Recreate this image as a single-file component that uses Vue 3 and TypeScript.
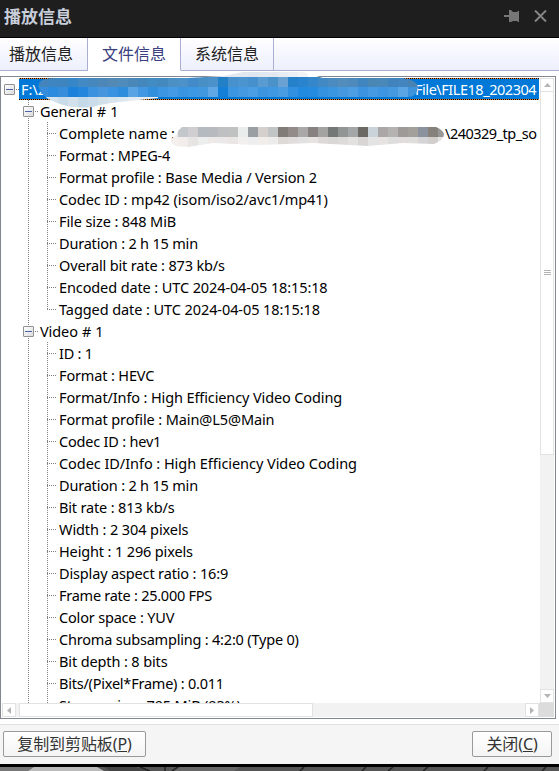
<script setup lang="ts">
interface Item {
  text: string
  tracking: number
  rest?: string
}

interface Group {
  title: string
  items: Item[]
}

interface Cell {
  x: number
  y: number
  h: number
  fill: string
}

const tabs = ['播放信息', '文件信息', '系统信息']
const activeTab = 1

const groups: Group[] = [
  {
    title: 'General # 1',
    items: [
      { text: 'Complete name : D:', tracking: 0, rest: '\\240329_tp_so' },
      { text: 'Format : MPEG-4', tracking: -0.2 },
      { text: 'Format profile : Base Media / Version 2', tracking: -0.13 },
      { text: 'Codec ID : mp42 (isom/iso2/avc1/mp41)', tracking: -0.06 },
      { text: 'File size : 848 MiB', tracking: -0.1 },
      { text: 'Duration : 2 h 15 min', tracking: -0.19 },
      { text: 'Overall bit rate : 873 kb/s', tracking: -0.15 },
      { text: 'Encoded date : UTC 2024-04-05 18:15:18', tracking: -0.11 },
      { text: 'Tagged date : UTC 2024-04-05 18:15:18', tracking: -0.08 },
    ],
  },
  {
    title: 'Video # 1',
    items: [
      { text: 'ID : 1', tracking: -0.25 },
      { text: 'Format : HEVC', tracking: -0.15 },
      { text: 'Format/Info : High Efficiency Video Coding', tracking: -0.12 },
      { text: 'Format profile : Main@L5@Main', tracking: -0.1 },
      { text: 'Codec ID : hev1', tracking: -0.2 },
      { text: 'Codec ID/Info : High Efficiency Video Coding', tracking: -0.05 },
      { text: 'Duration : 2 h 15 min', tracking: -0.19 },
      { text: 'Bit rate : 813 kb/s', tracking: -0.16 },
      { text: 'Width : 2 304 pixels', tracking: -0.1 },
      { text: 'Height : 1 296 pixels', tracking: -0.14 },
      { text: 'Display aspect ratio : 16:9', tracking: -0.15 },
      { text: 'Frame rate : 25.000 FPS', tracking: -0.26 },
      { text: 'Color space : YUV', tracking: -0.18 },
      { text: 'Chroma subsampling : 4:2:0 (Type 0)', tracking: -0.2 },
      { text: 'Bit depth : 8 bits', tracking: -0.12 },
      { text: 'Bits/(Pixel*Frame) : 0.011', tracking: -0.23 },
      { text: 'Stream size : 795 MiB (93%)', tracking: -0.15 },
    ],
  },
]

const strip = (colors: string, y: number, h: number): Cell[] =>
  colors.split(' ').map((c, i) => ({ x: i * 10, y, h, fill: '#' + c }))

const pathCells: Cell[] = [
  ...strip('fff fff fff fff fff fff fff fff fff fff fff fff fff fff fff fff f4f4f8 ecedf3 e6e9f1 e3e8f1 e3e8f0 dfe6ef e2e8f0 e4e9f1 e9ecf3 eeeff5 f3f3f7 fff fff fff fff fff fff fff fff fff fff fff', 0, 5),
  ...strip('4284bb 3f86c1 3e84bf 3786c8 4389c3 4688bd 4c87b7 5289b5 508cbb 4b88ba 4387bd 438bc3 4489bd 4b8fc3 4c91c7 428bc8 488fc6 4b91ca 2480c6 4791cd 4c94cf 4590cd 5a9bd1 4b92cb 69a2d2 2681cb 2983cd 3387ca 4289c4 4b8bc0 528dbc 4e8abb 4185bf 4b87b5 4a88ba 4083bd 4385be 4883b4', 5, 10),
  ...strip('368ddb 2b8bde 368ddb 1b81da 2486dd 3b93df 4796dd 3993e0 2f8ddd 57a3e4 4197e1 328fdc 3d96e1 449ae4 3995e2 3d98e3 4298df 60a8e5 147fd9 3b95e0 4499e0 4b9ee3 3d95df 4198e2 499be2 3191e0 228adf 248be0 3592e1 3b96e2 4799df 4d9de2 3c94e0 459ae3 3e95e1 4599df 5ba5e5 3e94dc', 15, 10),
  ...strip('e5edf3 d5e3ee c9dce9 d2e1eb c4dae9 cbddea d2e0e9 d8e4ec dde7ef e3ebf2 e6edf2 edf1f5', 25, 11),
]

const nameCells: Cell[] = [
  ...strip('eeeceb c2c7cb d0ced0 b5bac0 b7bbc0 bec0c1 c0c2c2 e9edec 999fa2 d5d0cd c1c5c6 817c77 938b89 aaa8a8 878280 a3a3a2 747876 919593 a4a7a7 6c6965 cbd3da aaa7a6 b4b3b2 9e9a97 a3a09c 8a929d 87817b 9a9896', 0, 10),
  ...strip('f5efed f2eceb e7e5e4 eceeee ede9e8 eae8e8 eae6e5 f1f0ef efeeee f1edeb eeeceb dddad8 e1dddc e2e1e1 e6e3e1 ddd9d7 d9d8d7 dcdbda e2e1e0 d8d6d4 e4e4e5 e7e3e2 dedede e0dddc dfdedc d5d5d8 d1cecb e5e3e2', 10, 10),
]
</script>

<template>
  <div class="window">
    <header class="titlebar">
      <span class="title">播放信息</span>
      <svg class="pin" width="16" height="14" viewBox="0 0 16 14">
        <path d="M0 6h5V1h2l2 2h4l1-1h1v11h-1l-1-1H9l-2 1H5V8H0z" fill="#777" />
      </svg>
      <svg class="close" width="13" height="12" viewBox="0 0 13 12">
        <path d="M1 .5l11 11M12 .5l-11 11" stroke="#858585" stroke-width="2" />
      </svg>
    </header>

    <nav class="tabs">
      <div v-for="(tab, i) in tabs" :key="tab" class="tab" :class="{ active: i === activeTab }">{{ tab }}</div>
      <div class="tab-rest"></div>
    </nav>

    <main class="tree">
      <div class="view">
        <div class="root row">
          <i class="toggle"></i><i class="dash"></i>
          <div class="selected">
            <span class="drive">F:\2</span><span class="tail">File\FILE18_202304</span>
          </div>
        </div>
        <section v-for="group in groups" :key="group.title" class="group">
          <div class="row heading">
            <i class="toggle"></i><i class="dash"></i><span class="label">{{ group.title }}</span>
          </div>
          <div class="items">
            <div v-for="(item, i) in group.items" :key="i" class="row item">
              <i class="branch"></i>
              <span class="label" :style="{ letterSpacing: item.tracking + 'px' }">{{ item.text }}</span>
              <span v-if="item.rest" class="rest">{{ item.rest }}</span>
            </div>
          </div>
        </section>
      </div>
      <div class="vbar">
        <div class="arrow"><svg width="7" height="4"><path d="M0 4L3.5 0 7 4z" /></svg></div>
        <div class="vthumb"><i></i><i></i><i></i></div>
        <div class="space"></div>
        <div class="arrow"><svg width="7" height="4"><path d="M0 0h7L3.5 4z" /></svg></div>
      </div>
      <div class="hbar">
        <div class="arrow"><svg width="4" height="7"><path d="M4 0v7L0 3.5z" /></svg></div>
        <div class="hthumb"></div>
        <div class="space"></div>
        <div class="arrow"><svg width="4" height="7"><path d="M0 0v7L4 3.5z" /></svg></div>
      </div>
      <div class="corner"></div>
      <svg class="mask path-mask" width="390" height="36" viewBox="0 0 390 36">
        <defs>
          <clipPath id="path-clip">
            <path d="M1 11Q4 6 18 6H150L185 4 205 0H265L285 6H365Q379 8 380 15Q379 25 370 25H130Q100 28 82 30T55 35Q35 37 22 32Q4 26 1 16z" />
          </clipPath>
        </defs>
        <g clip-path="url(#path-clip)" shape-rendering="crispEdges">
          <rect v-for="(c, i) in pathCells" :key="i" :x="c.x" :y="c.y" width="10" :height="c.h" :fill="c.fill" />
        </g>
      </svg>
      <svg class="mask name-mask" width="280" height="20" viewBox="0 0 280 20">
        <defs>
          <clipPath id="name-clip">
            <path d="M10 4L14 0H268Q275 3 276 7Q276 13 266 17L235 16 200 19 145 16 90 18 45 16 20 20 8 19Q3 17 3 13Q4 10 8 9z" />
          </clipPath>
        </defs>
        <g clip-path="url(#name-clip)" shape-rendering="crispEdges">
          <rect v-for="(c, i) in nameCells" :key="i" :x="c.x" :y="c.y" width="10" :height="c.h" :fill="c.fill" />
        </g>
      </svg>
    </main>

    <footer class="actions">
      <button class="copy"><span>复制到剪贴板(<u>P</u>)</span></button>
      <button class="shut"><span>关闭(<u>C</u>)</span></button>
    </footer>
    <div class="edge"></div>
    <svg class="backdrop" width="559" height="4" viewBox="0 0 559 4">
      <rect width="559" height="4" fill="#555" />
      <path d="M0 0H34L28 4H0z" fill="#777" />
      <path d="M34 0H97L104 4H28z" fill="#bbb" />
      <path d="M104 0H135L150 4H110z" fill="#444" />
      <path d="M140 0l10 4M165 0v4M178 0l-6 4M304 0l-4 4M366 0l-4 4M393 0l-5 4M428 0l-5 4M488 0l-4 4M546 0l-4 4" stroke="#222" stroke-width="1.5" />
      <path d="M180 0H240L234 4H174z" fill="#666" />
    </svg>
  </div>
</template>

<style>
body {
  margin: 0;
  overflow: hidden;
}
</style>

<style scoped>
.window {
  width: 559px;
  height: 771px;
  display: flex;
  flex-direction: column;
  overflow: hidden;
  background: #fff;
  font-family: "Noto Sans", "Noto Sans CJK SC", sans-serif;
  color: #000;
}
.titlebar {
  box-sizing: border-box;
  height: 38px;
  flex: none;
  display: flex;
  align-items: center;
  padding: 0 12px 6px 4px;
  background: #1e1e1e;
  border-bottom: 1px solid #000;
}
.title {
  flex: 1;
  font: 700 17px/24px "Noto Sans CJK SC", sans-serif;
  color: #c9cedb;
}
.pin {
  margin-right: 14px;
}
.tabs {
  height: 33px;
  flex: none;
  display: flex;
  font: 16px/30px "Noto Sans CJK SC", sans-serif;
  color: #222;
}
.tab,
.tab-rest {
  box-sizing: border-box;
  border-bottom: 1px solid #a9aed2;
  background: linear-gradient(#fff, #eceffd);
}
.tab {
  width: 93px;
  padding-left: 14px;
  border-right: 1px solid #a9aed2;
}
.tab:first-child {
  width: 88px;
  padding-left: 9px;
}
.tab.active {
  background: #fff;
  border-bottom-color: #fff;
  color: #3a4080;
}
.tab-rest {
  flex: 1;
}
.tree {
  position: relative;
  box-sizing: border-box;
  width: 556px;
  height: 643px;
  flex: none;
  margin-top: 5px;
  border: 1px solid #828790;
  padding: 1px;
  display: grid;
  grid-template: 625px 14px / 537px 15px;
}
.view {
  position: relative;
  overflow: hidden;
  width: 538px;
  height: 625px;
}
.row {
  height: 22px;
  display: flex;
  align-items: center;
  white-space: pre;
  font-size: 14.5px;
  line-height: 22px;
}
.toggle {
  box-sizing: border-box;
  width: 11px;
  height: 11px;
  flex: none;
  border: 1px solid #919191;
  border-radius: 1px;
  background: linear-gradient(#4b63a7, #4b63a7) center / 7px 1px no-repeat, linear-gradient(135deg, #fff, #dcdcdc);
}
.dash {
  width: 4px;
  height: 1px;
  flex: none;
  background: repeating-linear-gradient(90deg, transparent 0 1px, #808080 1px 2px);
}
.root {
  padding-left: 2px;
}
.selected {
  box-sizing: border-box;
  width: 520px;
  height: 22px;
  display: flex;
  align-items: center;
  padding-left: 2px;
  background:
    repeating-linear-gradient(90deg, #f08228 0 1px, #000 1px 2px) top / 100% 1px no-repeat,
    repeating-linear-gradient(90deg, #000 0 1px, #f08228 1px 2px) bottom / 100% 1px no-repeat,
    #0078d7;
  color: #fff;
}
.drive {
  width: 394px;
  flex: none;
}
.tail {
  letter-spacing: -0.46px;
}
.heading {
  padding-left: 21px;
}
.heading .label {
  padding-left: 2px;
  letter-spacing: -0.1px;
  word-spacing: 0.4px;
}
.group {
  background: repeating-linear-gradient(#808080 0 1px, transparent 1px 2px) 26px 0 / 1px 100% no-repeat;
}
.items {
  margin-left: 45px;
}
.item {
  background: repeating-linear-gradient(#808080 0 1px, transparent 1px 2px) 0 0 / 1px 100% no-repeat;
}
.group:nth-of-type(1) .item:last-child {
  background-size: 1px 12px;
}
.branch {
  width: 9px;
  height: 1px;
  flex: none;
  background: repeating-linear-gradient(90deg, #808080 0 1px, transparent 1px 2px);
}
.item .label {
  padding-left: 3px;
}
.rest {
  position: absolute;
  left: 443px;
  letter-spacing: -0.5px;
}
.mask {
  position: absolute;
  display: block;
}
.path-mask {
  left: 37px;
  top: -5px;
}
.name-mask {
  left: 167px;
  top: 50px;
}
.vbar {
  width: 14px;
  margin-left: 1px;
  display: flex;
  flex-direction: column;
  background: #f2f2f2;
}
.hbar {
  display: flex;
  background: #f2f2f2;
}
.arrow {
  box-sizing: border-box;
  width: 14px;
  height: 14px;
  flex: none;
  display: flex;
  align-items: center;
  justify-content: center;
  border: 1px solid #e2e2e2;
  background: #fff;
}
.arrow path {
  fill: #b4b4b4;
}
.vthumb {
  box-sizing: border-box;
  height: 363px;
  display: flex;
  flex-direction: column;
  align-items: center;
  justify-content: center;
  gap: 1px;
  padding-bottom: 2px;
  border: 1px solid #e2e2e2;
  border-top: 0;
  background: #fff;
}
.vthumb i {
  width: 7px;
  height: 1px;
  background: #b4b4b4;
}
.hthumb {
  box-sizing: border-box;
  width: 294px;
  margin-left: 3px;
  border: 1px solid #e2e2e2;
  background: #fff;
}
.space {
  flex: 1;
}
.corner {
  background: #dcdcdc;
}
.actions {
  box-sizing: border-box;
  height: 40px;
  flex: none;
  display: flex;
  justify-content: space-between;
  align-items: flex-start;
  margin-top: 5px;
  padding: 6px 7px 0 3px;
  border-top: 1px solid #e1e1e1;
  background: #f5f5f5;
}
.actions button {
  box-sizing: border-box;
  height: 26px;
  margin: 0;
  padding: 0;
  border: 1px solid #9a9a9a;
  border-radius: 2px;
  background: linear-gradient(#fff, #f4f4f4);
  color: #333;
  font: 16px/24px "Noto Sans", "Noto Sans CJK SC", sans-serif;
  letter-spacing: -0.1px;
}
.copy {
  width: 143px;
}
.shut {
  width: 80px;
}
.edge {
  height: 3px;
  flex: none;
  background: #000;
}
.backdrop {
  display: block;
  flex: none;
}
</style>
